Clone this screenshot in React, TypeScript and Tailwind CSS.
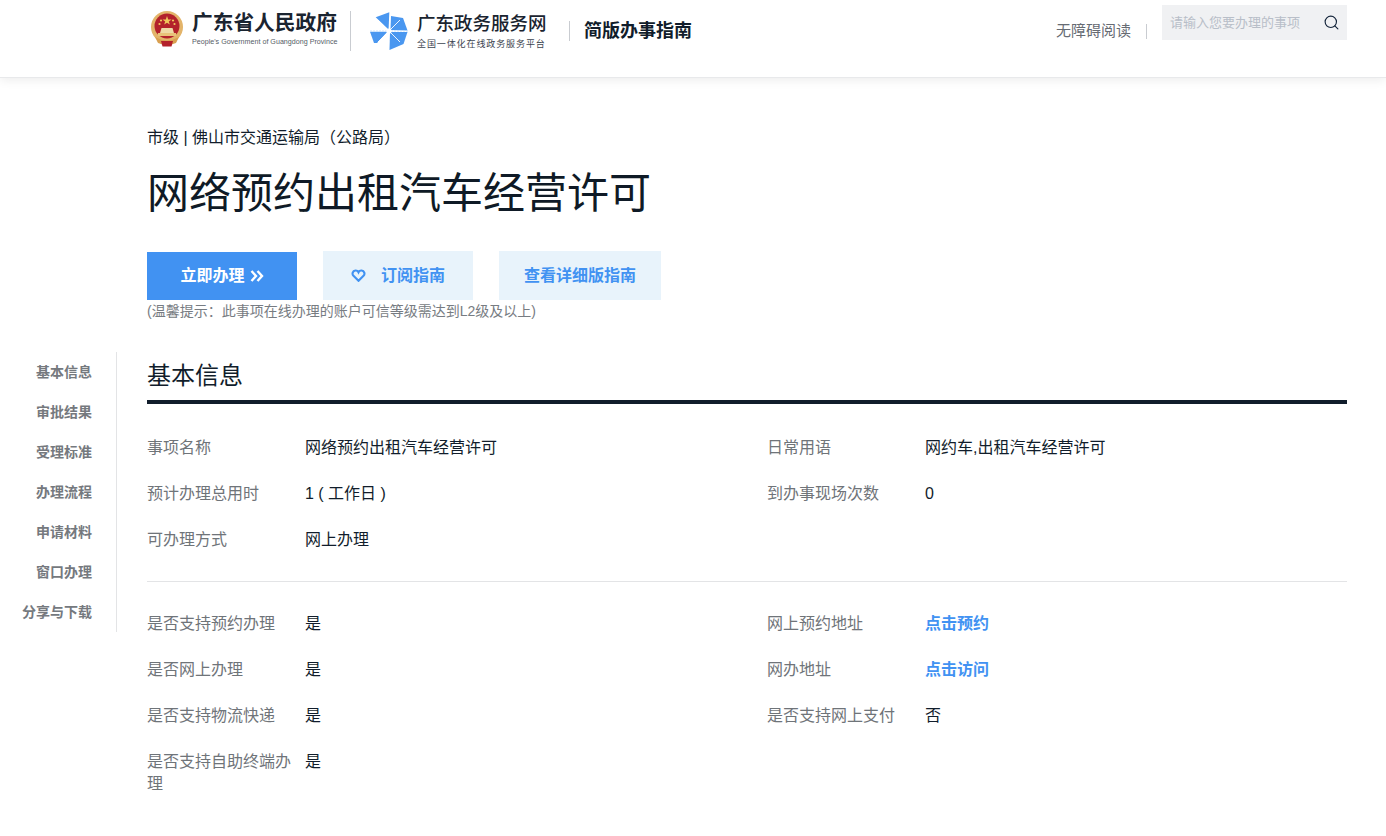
import { Search } from "lucide-react";

const font = "font-['Liberation_Sans','Noto_Sans_CJK_SC',sans-serif]";

const navItems = ["基本信息", "审批结果", "受理标准", "办理流程", "申请材料", "窗口办理", "分享与下载"];

type Item = { label: string; value?: string; link?: boolean };

const basicRows: Item[] = [
  { label: "事项名称", value: "网络预约出租汽车经营许可" },
  { label: "日常用语", value: "网约车,出租汽车经营许可" },
  { label: "预计办理总用时", value: "1 ( 工作日 )" },
  { label: "到办事现场次数", value: "0" },
  { label: "可办理方式", value: "网上办理" },
];

const supportRows: Item[] = [
  { label: "是否支持预约办理", value: "是" },
  { label: "网上预约地址", value: "点击预约", link: true },
  { label: "是否网上办理", value: "是" },
  { label: "网办地址", value: "点击访问", link: true },
  { label: "是否支持物流快递", value: "是" },
  { label: "是否支持网上支付", value: "否" },
  { label: "是否支持自助终端办理", value: "是" },
];

function Emblem() {
  return (
    <svg width="34" height="36" viewBox="0 0 34 36" className="shrink-0">
      <circle cx="17" cy="16" r="16" fill="#e3b46a" />
      <circle cx="17" cy="15" r="12.5" fill="#b3212b" />
      <polygon points="17,5 18.2,8.4 21.6,8.4 18.8,10.4 19.8,13.6 17,11.7 14.2,13.6 15.2,10.4 12.4,8.4 15.8,8.4" fill="#f0c55c" />
      <circle cx="11" cy="9.5" r="1.1" fill="#f0c55c" />
      <circle cx="23" cy="9.5" r="1.1" fill="#f0c55c" />
      <circle cx="9.5" cy="13" r="1.1" fill="#f0c55c" />
      <circle cx="24.5" cy="13" r="1.1" fill="#f0c55c" />
      <path d="M10 22 L11.5 17 H22.5 L24 22 Z" fill="#efd9a6" />
      <rect x="8" y="22" width="18" height="3" fill="#e8c27a" />
      <path d="M5 26 Q17 33 29 26 L26 32 Q17 36 8 32 Z" fill="#d9a050" />
      <path d="M11 30 H23 L21.5 35.5 H12.5 Z" fill="#b3212b" />
    </svg>
  );
}

function Pinwheel() {
  return (
    <svg width="38" height="38" viewBox="0 0 38 38" className="shrink-0">
      <path d="M5.7 5.3 L19.3 0.3 L18.6 17.4 Z" fill="#4a97f0" />
      <path d="M21 4 L33 6 L37.5 18.5 L20.5 18 Z" fill="#4a97f0" />
      <path d="M0 19.8 L17.5 19.8 L7 31 L4 31 Z" fill="#4a97f0" />
      <path d="M20 20 L37.5 20 L33.5 32 L19.5 38 Z" fill="#4a97f0" />
      <path d="M8 8 L30 30 M30 8 L8 30" stroke="#ffffff" strokeWidth="0.9" />
      <path d="M0 19 H38" stroke="#bcdcff" strokeWidth="0.8" strokeDasharray="2 1" />
      <circle cx="19" cy="19" r="2.6" fill="#ffffff" />
    </svg>
  );
}

function Header() {
  return (
    <header className="relative flex h-[78px] items-start justify-between border-b border-[#e8e9eb] pl-[150px] pr-[39px] shadow-[0_2px_10px_rgba(0,0,0,0.08)]">
      <div className="flex items-start">
        <div className="flex items-center pt-[11px]">
          <Emblem />
          <div className="ml-[8px] w-[146px]">
            <div className="text-[20.7px] leading-[24px] font-bold whitespace-nowrap text-[#1a2430]">广东省人民政府</div>
            <div className="mt-[3px] w-[250px] origin-top-left scale-[0.714] text-[10px] leading-[9px] whitespace-nowrap text-[#555c66]">
              People's Government of Guangdong Province
            </div>
          </div>
        </div>
        <div className="mt-[11px] ml-[12px] h-[40px] w-px bg-[#c9ccd1]" />
        <div className="mt-[12px] ml-[19px] flex items-start">
          <Pinwheel />
          <div className="ml-[9px] w-[132px]">
            <div className="text-[18.5px] leading-[24px] font-medium whitespace-nowrap text-[#1a2430]">广东政务服务网</div>
            <div className="mt-[3px] w-[150px] origin-top-left scale-[0.9] text-[10px] leading-[11px] tracking-[1px] whitespace-nowrap text-[#3c4550]">
              全国一体化在线政务服务平台
            </div>
          </div>
        </div>
        <div className="mt-[21px] ml-[20px] h-[20px] w-px bg-[#c9ccd1]" />
        <div className="mt-[18px] ml-[14px] text-[18px] leading-[26px] font-bold whitespace-nowrap text-[#111d2b]">简版办事指南</div>
      </div>
      <div className="flex items-start">
        <div className="mt-[21px] text-[15px] leading-[20px] whitespace-nowrap text-[#666b73]">无障碍阅读</div>
        <div className="mt-[24px] ml-[15px] h-[15px] w-px bg-[#c9ccd1]" />
        <div className="mt-[5px] ml-[15px] flex h-[35px] w-[185px] items-center justify-between bg-[#f0f1f3] pr-[7px] pl-[8px]">
          <span className="text-[13px] whitespace-nowrap text-[#b8bec8]">请输入您要办理的事项</span>
          <Search className="h-[17px] w-[17px] text-[#13243a]" strokeWidth={1.6} />
        </div>
      </div>
    </header>
  );
}

function Field({ item }: { item: Item }) {
  return (
    <div className="flex w-[620px] items-start pb-[14px] text-[16px] leading-[22px]">
      <div className="w-[146px] shrink-0 text-[#6f7479]">{item.label}</div>
      <div className={item.link ? "ml-[12px] font-bold text-[#4192f2]" : "ml-[12px] text-[#111d2b]"}>{item.value}</div>
    </div>
  );
}

function Fields({ items }: { items: Item[] }) {
  return (
    <div className="grid grid-cols-[620px_580px] gap-y-[10px]">
      {items.map((item) => (
        <Field key={item.label} item={item} />
      ))}
    </div>
  );
}

export default function App() {
  return (
    <div className={`${font} h-[836px] overflow-hidden bg-white`}>
      <Header />

      <div className="pt-[49px] pl-[147px]">
        <div className="text-[16px] leading-[22px] text-[#111d2b]">市级 | 佛山市交通运输局（公路局）</div>
        <h1 className="mt-[18px] text-[42px] leading-[54px] text-[#0f1a26]">网络预约出租汽车经营许可</h1>
        <div className="mt-[30px] flex items-center gap-[26px]">
          <button className="flex h-[48px] w-[150px] items-center justify-center bg-[#4192f2] text-[16px] font-bold text-white">
            立即办理
            <svg width="14" height="12" viewBox="0 0 14 12" className="ml-[5px]" fill="none" stroke="currentColor" strokeWidth="2.4">
              <path d="M1.5 1 L6 6 L1.5 11" />
              <path d="M7.5 1 L12 6 L7.5 11" />
            </svg>
          </button>
          <button className="flex h-[49px] w-[150px] items-center justify-center bg-[#e8f3fb] text-[16px] font-bold text-[#4192f2]">
            <svg width="15" height="13" viewBox="0 0 24 22" fill="none" stroke="currentColor" strokeWidth="3.6" className="mr-[15px]">
              <path d="M12 20 L3.5 11.5 C0.5 8.5 2 3 6.8 2.5 C9 2.3 11 3.5 12 5.5 C13 3.5 15 2.3 17.2 2.5 C22 3 23.5 8.5 20.5 11.5 Z" />
            </svg>
            订阅指南
          </button>
          <button className="flex h-[49px] w-[162px] items-center justify-center bg-[#e8f3fb] text-[16px] font-bold text-[#4192f2]">查看详细版指南</button>
        </div>
        <div className="text-[14px] leading-[22px] text-[#777c82]">(温馨提示：此事项在线办理的账户可信等级需达到L2级及以上)</div>
      </div>

      <div className="mt-[30px] flex items-start">
        <nav className="flex h-[280px] w-[117px] shrink-0 flex-col items-end border-r border-[#e3e4e6] pr-[24px]">
          {navItems.map((name) => (
            <div key={name} className="h-[40px] shrink-0 text-[14px] leading-[40px] font-bold whitespace-nowrap text-[#75797e]">
              {name}
            </div>
          ))}
        </nav>
        <main className="ml-[30px] w-[1200px]">
          <h2 className="border-b-4 border-[#111d2b] pt-[6px] pb-[6px] text-[24px] leading-[36px] text-[#111d2b]">基本信息</h2>
          <div className="mt-[33px] border-b border-[#e3e4e6] pb-[16px]">
            <Fields items={basicRows} />
          </div>
          <div className="mt-[31px]">
            <Fields items={supportRows} />
          </div>
        </main>
      </div>
    </div>
  );
}
